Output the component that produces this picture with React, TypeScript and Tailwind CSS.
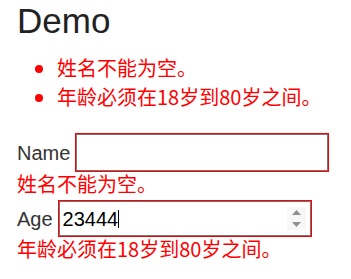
import React from "react";

const FONT = "'Liberation Sans', Arial, 'Noto Sans CJK SC', sans-serif";
const CJK = "'Noto Sans CJK SC', 'Liberation Sans', sans-serif";

export default function App() {
  return (
    <div
      className="w-[351px] h-[279px] bg-white pl-[17px] pt-[1px] text-[20px] text-[#333]"
      style={{ fontFamily: FONT }}
    >
      <h1 className="text-[35px] leading-[40px] text-[#222] font-normal">Demo</h1>
      <ul
        className="list-disc pl-[40px] mt-[14px] text-[#ff0000]"
        style={{ fontFamily: CJK }}
      >
        <li className="leading-[25px] pb-[4px]">姓名不能为空。</li>
        <li className="leading-[25px] pb-[4px]">年龄必须在18岁到80岁之间。</li>
      </ul>
      <form className="mt-[20px]">
        <div className="flex items-center gap-[5px] h-[39px]">
          <label className="leading-[28px]">Name</label>
          <div className="w-[254px] h-[39px] border border-[#ff0000]">
            <div className="w-full h-full border border-[#767676]" />
          </div>
        </div>
        <div className="text-[#ff0000] leading-[24px] pb-[4px]" style={{ fontFamily: CJK }}>
          姓名不能为空。
        </div>
        <div className="flex items-center gap-[5px] h-[37px]">
          <label className="leading-[28px]">Age</label>
          <div className="w-[254px] h-[37px] border border-[#ff0000]">
            <div className="w-full h-full border border-[#767676] flex items-center pl-[3px] pr-[4px]">
              <span className="text-black leading-[22px]">23444</span>
              <span className="inline-block w-[1px] h-[18px] bg-black" />
              <div className="ml-auto w-[19px] h-[23px] bg-[#f7f7f7] flex flex-col items-center justify-center gap-[7px]">
                <svg width="9" height="5" viewBox="0 0 9 5">
                  <path d="M4.5 0 L9 5 L0 5 Z" fill="#8f8f8f" />
                </svg>
                <svg width="9" height="5" viewBox="0 0 9 5">
                  <path d="M0 0 L9 0 L4.5 5 Z" fill="#8f8f8f" />
                </svg>
              </div>
            </div>
          </div>
        </div>
        <div className="text-[#ff0000] leading-[24px] pb-[4px]" style={{ fontFamily: CJK }}>
          年龄必须在18岁到80岁之间。
        </div>
      </form>
    </div>
  );
}
